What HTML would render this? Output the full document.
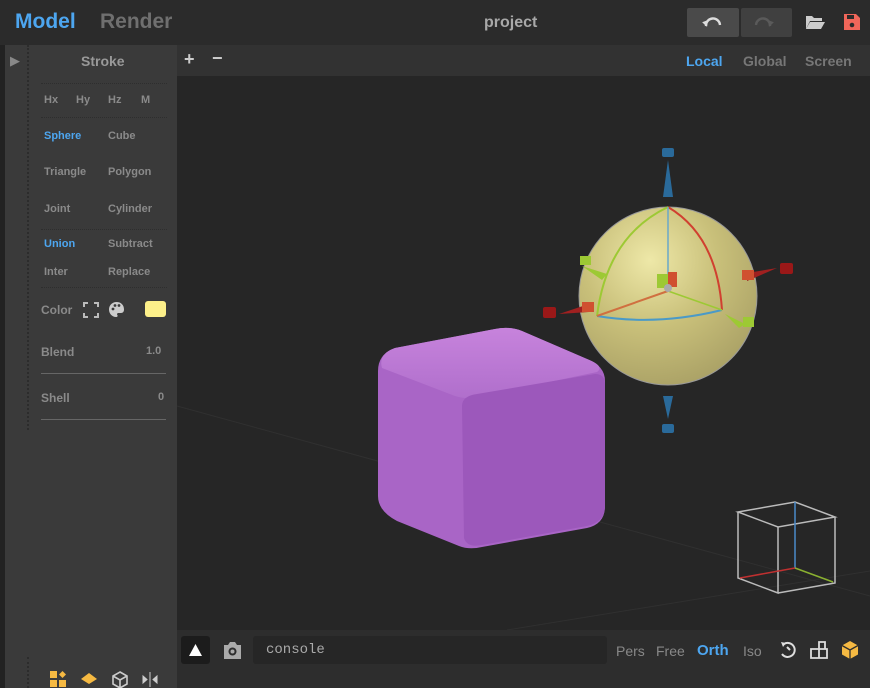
<!DOCTYPE html>
<html><head><meta charset="utf-8"><style>
*{margin:0;padding:0;box-sizing:border-box}
body{width:870px;height:688px;background:#2a2a2a;font-family:"Liberation Sans",sans-serif;position:relative;overflow:hidden}
.a{position:absolute}
.t{position:absolute;font-size:11px;color:#8a8a8a;font-weight:bold}
.b{color:#4da6f0}
.sep{position:absolute;left:41px;width:126px;border-top:1px dotted #2e2e2e}
</style></head><body>
<div class="a" style="left:0;top:0;width:870px;height:45px;background:#2b2b2b"></div>
<div class="a" style="left:15px;top:10px;font-size:21px;font-weight:bold;color:#4da6f0">Model</div>
<div class="a" style="left:100px;top:10px;font-size:21px;font-weight:bold;color:#6f6f6f">Render</div>
<div class="a" style="left:484px;top:14px;font-size:16px;font-weight:bold;color:#a8a8a8">project</div>
<div class="a" style="left:687px;top:8px;width:52px;height:29px;background:#4a4a4a;border-radius:2px"></div>
<div class="a" style="left:741px;top:8px;width:51px;height:29px;background:#404040;border-radius:2px"></div>
<svg class="a" style="left:700px;top:12px" width="80" height="22"><path d="M6 14 A7 7 0 0 1 20 13" stroke="#ddd" stroke-width="2.4" fill="none"/><path d="M3 9 L9 9 L6 15Z" fill="#ddd" transform="rotate(-20 6 12)"/><path d="M56 13 A7 7 0 0 1 70 14" stroke="#5a5a5a" stroke-width="2.4" fill="none"/><path d="M67 9 L73 9 L70 15Z" fill="#5a5a5a" transform="rotate(20 70 12)"/></svg>
<svg class="a" style="left:805px;top:14px" width="20" height="16"><path d="M1 2h6l2 2h8v3H5L1 15Z" fill="#ccc"/><path d="M5 8h15l-4 7H1Z" fill="#ccc"/></svg>
<svg class="a" style="left:843px;top:13px" width="18" height="18"><path d="M1 1h12l4 4v12H1Z" fill="#f0665a"/><rect x="4" y="2" width="7" height="4" fill="#2b2b2b"/><circle cx="9" cy="12" r="2.3" fill="#2b2b2b"/></svg>

<div class="a" style="left:0;top:45px;width:5px;height:643px;background:#222"></div>
<div class="a" style="left:5px;top:45px;width:172px;height:643px;background:#3a3a3a"></div>
<div class="a" style="left:27px;top:45px;width:5px;height:385px;border-left:2px dotted #2c2c2c"></div>
<div class="a" style="left:10px;top:53px;font-size:13px;color:#888">▶</div>
<div class="a" style="left:81px;top:53px;font-size:14px;font-weight:bold;color:#999">Stroke</div>
<div class="sep" style="top:83px"></div>
<div class="t" style="left:44px;top:94px">Hx</div><div class="t" style="left:76px;top:94px">Hy</div><div class="t" style="left:108px;top:94px">Hz</div><div class="t" style="left:141px;top:94px">M</div>
<div class="sep" style="top:117px"></div>
<div class="t b" style="left:44px;top:130px">Sphere</div><div class="t" style="left:108px;top:130px">Cube</div>
<div class="t" style="left:44px;top:166px">Triangle</div><div class="t" style="left:108px;top:166px">Polygon</div>
<div class="t" style="left:44px;top:203px">Joint</div><div class="t" style="left:108px;top:203px">Cylinder</div>
<div class="sep" style="top:229px"></div>
<div class="t b" style="left:44px;top:238px">Union</div><div class="t" style="left:108px;top:238px">Subtract</div>
<div class="t" style="left:44px;top:266px">Inter</div><div class="t" style="left:108px;top:266px">Replace</div>
<div class="sep" style="top:287px"></div>
<div class="t" style="left:41px;top:303px;font-size:12px">Color</div>
<svg class="a" style="left:83px;top:302px" width="16" height="16"><path d="M1 5V1h4M11 1h4v4M15 11v4h-4M5 15H1v-4" stroke="#bbb" stroke-width="2" fill="none"/></svg>
<svg class="a" style="left:108px;top:301px" width="17" height="17"><path d="M8.5 1C4 1 1 4.5 1 8.5S4 16 8 16c1.5 0 2-1 1.3-2-.6-1 0-2 1.2-2H13c2 0 3-1.5 3-3.5C16 4 13 1 8.5 1Z" fill="#ccc"/><circle cx="5" cy="8" r="1.4" fill="#3a3a3a"/><circle cx="7" cy="4.5" r="1.4" fill="#3a3a3a"/><circle cx="11" cy="4.5" r="1.4" fill="#3a3a3a"/></svg>
<div class="a" style="left:145px;top:301px;width:21px;height:16px;background:#fdf08a;border-radius:3px"></div>
<div class="t" style="left:41px;top:345px;font-size:12px">Blend</div><div class="t" style="left:146px;top:345px">1.0</div>
<div class="a" style="left:41px;top:373px;width:125px;height:1px;background:#666"></div>
<div class="t" style="left:41px;top:391px;font-size:12px">Shell</div><div class="t" style="left:158px;top:391px">0</div>
<div class="a" style="left:41px;top:419px;width:125px;height:1px;background:#666"></div>
<div class="a" style="left:27px;top:657px;width:3px;height:31px;border-left:2px dotted #2c2c2c"></div>
<svg class="a" style="left:50px;top:671px" width="112" height="17"><rect x="0" y="0" width="7" height="7" fill="#f5b942"/><rect x="0" y="9" width="7" height="7" fill="#f5b942"/><rect x="9" y="9" width="7" height="7" fill="#f5b942"/><path d="M12.5 0L16 3.5 12.5 7 9 3.5Z" fill="#f5b942"/><path d="M39 2L47 8 39 13 31 8Z" fill="#f5b942"/><path d="M70 1l7 4v8l-7 4-7-4V5Z M63 5l7 4 7-4 M70 9v8" stroke="#ccc" stroke-width="1.6" fill="none"/><path d="M100 1v15M93 5l4 3.5-4 3.5Z M107 5l-4 3.5 4 3.5Z" stroke="#ccc" fill="#ccc"/></svg>

<div class="a" style="left:177px;top:45px;width:693px;height:31px;background:#323232"></div>
<div class="a" style="left:184px;top:49px;font-size:18px;font-weight:bold;color:#ccc">+</div>
<div class="a" style="left:212px;top:48px;font-size:18px;font-weight:bold;color:#ccc">−</div>
<div class="a" style="left:686px;top:53px;font-size:14px;font-weight:bold;color:#4da6f0">Local</div>
<div class="a" style="left:743px;top:53px;font-size:14px;font-weight:bold;color:#777">Global</div>
<div class="a" style="left:805px;top:53px;font-size:14px;font-weight:bold;color:#777">Screen</div>

<svg class="a" style="left:177px;top:76px" width="693" height="554">
<rect width="693" height="554" fill="#262626"/>
<line x1="0" y1="330" x2="693" y2="520" stroke="#303030"/>
<line x1="330" y1="554" x2="693" y2="495" stroke="#303030"/>
<defs><radialGradient id="sg" cx="0.4" cy="0.3" r="0.75"><stop offset="0" stop-color="#eee8a8"/><stop offset="0.5" stop-color="#c9c07a"/><stop offset="1" stop-color="#a9a065"/></radialGradient>
<linearGradient id="tp" x1="0" y1="0" x2="0" y2="1"><stop offset="0" stop-color="#c783dc"/><stop offset="1" stop-color="#b06fcc"/></linearGradient></defs>
<!-- cube -->
<path d="M218 272 Q201 278 201 295 L201 420 Q201 435 220 445 L282 470 Q292 474 305 471 L410 452 Q428 448 428 430 L428 305 Q428 290 410 283 L345 255 Q333 250 318 253 Z" fill="#a965c6"/>
<path d="M218 272 Q201 278 205 292 L278 320 Q290 324 305 320 L420 296 Q428 290 410 283 L345 255 Q333 250 318 253 Z" fill="url(#tp)"/>
<path d="M285 330 Q285 320 300 318 L418 298 Q428 298 428 308 L428 430 Q428 446 410 450 L305 469 Q290 472 287 462 Z" fill="#9c58bb"/>
<!-- sphere -->
<circle cx="491" cy="220" r="89" fill="url(#sg)" stroke="#999" stroke-width="1"/>
<path d="M491 131 Q430 160 420 240" stroke="#9dc934" stroke-width="2" fill="none"/>
<path d="M491 131 Q540 160 545 234" stroke="#d04030" stroke-width="2" fill="none"/>
<path d="M420 240 Q480 250 545 234" stroke="#4a9ac8" stroke-width="2" fill="none"/>
<line x1="491" y1="131" x2="491" y2="212" stroke="#6aa8c8" stroke-width="1.5"/>
<line x1="420" y1="240" x2="491" y2="215" stroke="#d07040" stroke-width="2"/>
<line x1="491" y1="215" x2="545" y2="234" stroke="#9dc934" stroke-width="1.5"/>
<rect x="480" y="198" width="11" height="14" fill="#9dc934"/><rect x="491" y="196" width="9" height="15" fill="#d05030"/>
<circle cx="491" cy="212" r="4" fill="#aaa"/>
<rect x="485" y="72" width="12" height="9" rx="2" fill="#2a6a9a"/><path d="M491 84 L486 121 L496 121Z" fill="#2a6a9a"/>
<rect x="485" y="348" width="12" height="9" rx="2" fill="#2a6a9a"/><path d="M491 343 L486 320 L496 320Z" fill="#2a6a9a"/>
<rect x="366" y="231" width="13" height="11" rx="2" fill="#9a1818"/><path d="M382 238 L412 228 L412 236Z" fill="#a02020"/><rect x="405" y="226" width="12" height="10" fill="#d05030"/>
<rect x="603" y="187" width="13" height="11" rx="2" fill="#9a1818"/><path d="M600 192 L570 197 L570 205Z" fill="#a02020"/><rect x="565" y="194" width="12" height="10" fill="#d05030"/>
<path d="M405 190 L430 198 L425 204Z" fill="#9dc934"/><rect x="403" y="180" width="11" height="9" fill="#9dc934"/>
<path d="M548 238 L568 248 L562 252Z" fill="#9dc934"/><rect x="566" y="241" width="11" height="10" fill="#9dc934"/>
<!-- nav cube -->
<g stroke="#bbb" stroke-width="1.5" fill="none"><path d="M561 436 L618 426 L658 441 L601 451 Z"/><path d="M561 436 V502 L601 517 V451 M658 441 V507 L601 517"/></g>
<line x1="618" y1="426" x2="618" y2="492" stroke="#4a8ac8" stroke-width="1.5"/>
<line x1="563" y1="502" x2="618" y2="492" stroke="#c03030" stroke-width="1.5"/>
<line x1="618" y1="492" x2="656" y2="506" stroke="#8ab030" stroke-width="1.5"/>
</svg>

<div class="a" style="left:177px;top:630px;width:693px;height:58px;background:#2d2d2d"></div>
<div class="a" style="left:181px;top:636px;width:29px;height:28px;background:#1c1c1c;border-radius:3px"></div>
<svg class="a" style="left:188px;top:643px" width="15" height="14"><path d="M7.5 1L14 13H1Z" fill="#fff"/></svg>
<svg class="a" style="left:222px;top:640px" width="21" height="20"><path d="M2 5h4l2-3h5l2 3h4v14H2Z" fill="#aaa"/><circle cx="10.5" cy="11.5" r="4" fill="#2d2d2d"/><circle cx="10.5" cy="11.5" r="2" fill="#aaa"/></svg>
<div class="a" style="left:253px;top:636px;width:354px;height:28px;background:#262626;border-radius:3px"></div>
<div class="a" style="left:266px;top:642px;font-family:'Liberation Mono',monospace;font-size:14px;color:#aaa">console</div>
<div class="a" style="left:616px;top:643px;font-size:14px;color:#888">Pers</div>
<div class="a" style="left:656px;top:643px;font-size:14px;color:#888">Free</div>
<div class="a" style="left:697px;top:642px;font-size:15px;font-weight:bold;color:#4da6f0">Orth</div>
<div class="a" style="left:743px;top:643px;font-size:14px;color:#888">Iso</div>
<svg class="a" style="left:778px;top:640px" width="20" height="20"><path d="M6 4 A7 7 0 1 1 4 14" stroke="#ddd" stroke-width="2" fill="none"/><path d="M3 2l5 1-3 4Z" fill="#ddd"/><path d="M9 7l3 3" stroke="#ddd" stroke-width="2"/></svg>
<svg class="a" style="left:810px;top:641px" width="18" height="18"><path d="M1 8h8v9H1Z M9 8h8v9H9Z M9 1h6v7H9Z" stroke="#ddd" stroke-width="1.8" fill="none"/></svg>
<svg class="a" style="left:841px;top:640px" width="18" height="20"><path d="M9 1l8 4.5v9L9 19 1 14.5v-9Z" fill="#f5b942"/><path d="M1 5.5l8 4.5 8-4.5M9 10v9" stroke="#2d2d2d" stroke-width="1.3" fill="none"/></svg>
</body></html>
